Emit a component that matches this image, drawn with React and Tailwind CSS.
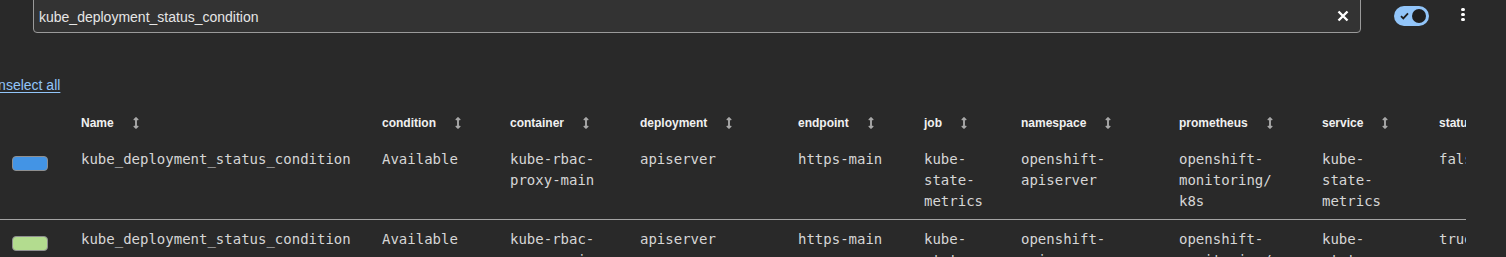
import React from "react";
import { FaArrowsAltV } from "react-icons/fa";

const columns = [
  { key: "name", label: "Name" },
  { key: "condition", label: "condition" },
  { key: "container", label: "container" },
  { key: "deployment", label: "deployment" },
  { key: "endpoint", label: "endpoint" },
  { key: "job", label: "job" },
  { key: "namespace", label: "namespace" },
  { key: "prometheus", label: "prometheus" },
  { key: "service", label: "service" },
  { key: "status", label: "status" },
];

const rows = [
  { swatch: "bg-[#4394e5]", status: "false" },
  { swatch: "bg-[#b3dc8f]", status: "true" },
];

const grid =
  "grid grid-cols-[81px_301px_128px_130px_158px_126px_97px_158px_143px_117px_80px]";

function SeriesRow({ swatch, status }) {
  const cell = "pr-[32px] leading-[21px]";
  return (
    <div className={`${grid} pt-[9px] pb-[7px] border-b border-[#a3a3a3] font-['DejaVu_Sans_Mono',monospace] text-[14px] text-[#d6d6d6]`}>
      <div>
        <div className={`mt-[7px] ml-[12px] w-[36px] h-[15px] rounded-[4px] border border-[#8f8f8f] ${swatch}`} />
      </div>
      <div className={`${cell} whitespace-nowrap`}>kube_deployment_status_condition</div>
      <div className={cell}>Available</div>
      <div className={cell}>kube-rbac-proxy-main</div>
      <div className={cell}>apiserver</div>
      <div className={cell}>https-main</div>
      <div className={cell}>kube-state-metrics</div>
      <div className={cell}>openshift-apiserver</div>
      <div className={cell}>
        openshift-monitoring/<wbr />k8s
      </div>
      <div className={cell}>kube-state-metrics</div>
      <div className={cell}>{status}</div>
    </div>
  );
}

export default function App() {
  return (
    <div className="w-[1506px] h-[257px] overflow-hidden bg-[#292929] font-['Liberation_Sans',Arial,sans-serif]">
      {/* toolbar */}
      <div className="flex items-start -mt-[2px] pl-[33px]">
        <div className="w-[1328px] flex items-center justify-between border border-[#9a9a9a] rounded-b-[4px] bg-[#333333] pl-[5px] pr-[11px] pt-[8px] pb-[5px]">
          <span className="text-[14px] leading-[20px] text-[#e6e6e6]">kube_deployment_status_condition</span>
          <svg width="12" height="12" viewBox="0 0 12 12" className="mb-[2px]">
            <path d="M1.5 1.5 L10.5 10.5 M10.5 1.5 L1.5 10.5" stroke="#ffffff" strokeWidth="2.4" />
          </svg>
        </div>
        <div className="ml-[33px] mt-[8px] w-[35px] h-[20px] rounded-full bg-[#92c5f9] flex items-center justify-between pl-[6px] pr-[3px]">
          <svg width="9" height="8" viewBox="0 0 9 8">
            <path d="M1 4.2 L3.3 6.4 L8 1.4" fill="none" stroke="#1f1f1f" strokeWidth="1.8" />
          </svg>
          <div className="w-[14px] h-[14px] rounded-full bg-[#1f1f1f]" />
        </div>
        <div className="ml-[32px] mt-[10px] flex flex-col gap-[2px]">
          <div className="w-[4px] h-[3px] rounded-full bg-white" />
          <div className="w-[4px] h-[3px] rounded-full bg-white" />
          <div className="w-[4px] h-[3px] rounded-full bg-white" />
        </div>
      </div>

      {/* unselect link */}
      <div className="mt-[40px] -ml-[12px] h-[20px]">
        <a href="#" className="text-[14px] leading-[20px] text-[#92c5f9] underline decoration-1 underline-offset-[2px]">
          Unselect all
        </a>
      </div>

      {/* series table */}
      <div className="mt-[13px] w-[1466px] overflow-hidden">
        <div className={`${grid} h-[34px] items-center`}>
          <div />
          {columns.map((c) => (
            <div key={c.key} className="flex items-center gap-4 text-[12px] font-bold text-[#f0f0f0] whitespace-nowrap">
              <span>{c.label}</span>
              {c.key !== "status" && <FaArrowsAltV size={12} className="text-[#a8a8a8]" />}
            </div>
          ))}
        </div>
        {rows.map((r, i) => (
          <SeriesRow key={i} {...r} />
        ))}
      </div>
    </div>
  );
}
